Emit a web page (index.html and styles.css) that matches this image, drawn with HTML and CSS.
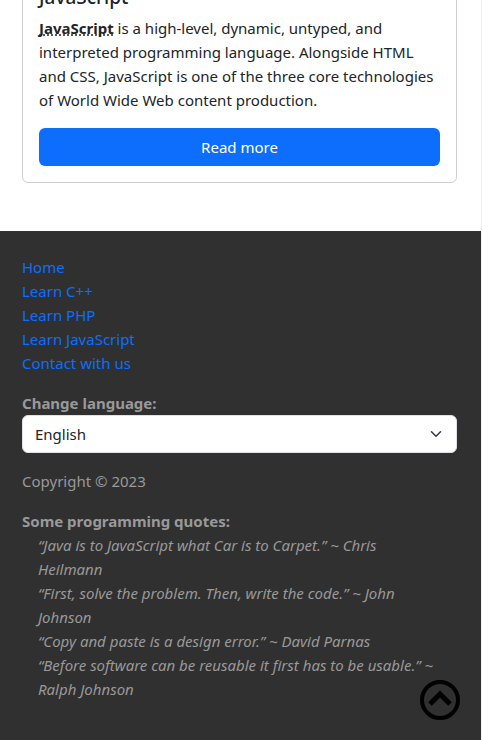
FILE: index.html
```html
<!DOCTYPE html>
<html lang="en">
<head>
  <meta charset="utf-8">
  <meta name="viewport" content="width=device-width, initial-scale=1">
  <title>Learn programming</title>
  <link rel="stylesheet" href="styles.css">
</head>
<body>
  <main class="content">
    <article class="card">
      <h5 class="card-title">JavaScript</h5>
      <p class="card-text"><abbr class="term">JavaScript</abbr> is a high-level, dynamic, untyped, and interpreted programming language. Alongside HTML and CSS, JavaScript is one of the three core technologies of World Wide Web content production.</p>
      <a class="btn" href="#javascript">Read more</a>
    </article>
  </main>
  <footer class="footer">
    <nav class="links">
      <a href="#home">Home</a>
      <a href="#cpp">Learn C++</a>
      <a href="#php">Learn PHP</a>
      <a href="#javascript">Learn JavaScript</a>
      <a href="#contact">Contact with us</a>
    </nav>
    <div class="language">
      <label for="language">Change language:</label>
      <div class="select-wrap">
        <select id="language" class="select">
          <option>English</option>
        </select>
        <svg class="chevron" viewBox="0 0 16 16" aria-hidden="true"><path d="m2 5 6 6 6-6"/></svg>
      </div>
    </div>
    <p class="copyright">Copyright © 2023</p>
    <section>
      <h6 class="quotes-title">Some programming quotes:</h6>
      <ul class="quotes">
        <li>“Java is to JavaScript what Car is to Carpet.” ~ Chris<br>Heilmann</li>
        <li>“First, solve the problem. Then, write the code.” ~ John<br>Johnson</li>
        <li>“Copy and paste is a design error.” ~ David Parnas</li>
        <li>“Before software can be reusable it first has to be usable.” ~ Ralph Johnson</li>
      </ul>
    </section>
  </footer>
  <a class="to-top" href="#home" aria-label="Back to top">
    <svg viewBox="0 0 40 40" aria-hidden="true"><circle cx="20" cy="20" r="18"/><path d="m10 24 10-10 10 10"/></svg>
  </a>
</body>
</html>
```

FILE: styles.css
```css
* {
  box-sizing: border-box;
}

body {
  display: flex;
  flex-direction: column;
  min-height: 100vh;
  margin: 0;
  border-right: 1px solid #f0f0f0;
  overflow: hidden;
  background: #fff;
  color: #212529;
  font-family: "Segoe UI", "Noto Sans", sans-serif;
  font-size: 15px;
  line-height: 24px;
}

a {
  color: #0d6efd;
  text-decoration: none;
}

.content {
  padding: 0 24px 48px 22px;
}

.card {
  margin-top: -32px;
  padding: 16px;
  border: 1px solid #cfcfcf;
  border-radius: 6px;
}

.card-title {
  margin: 0 0 7px;
  font-size: 19px;
  font-weight: 500;
  line-height: 24px;
}

.card-text {
  margin: 0 0 16px;
}

.term {
  font-weight: 700;
  text-decoration: underline dotted;
  text-decoration-skip-ink: none;
}

.btn {
  display: block;
  padding: 7px 12px;
  border-radius: 6px;
  background: #0d6efd;
  color: #fff;
  text-align: center;
}

.footer {
  flex: 1;
  padding: 24px 24px 38px 22px;
  background: #303030;
  color: #999;
}

.links {
  display: flex;
  flex-direction: column;
  align-items: flex-start;
}

.language {
  margin: 16px 0;
}

.language label {
  display: block;
  font-weight: 700;
}

.select-wrap {
  position: relative;
}

.select {
  display: block;
  width: 100%;
  height: 38px;
  padding: 0 36px 0 12px;
  border: 1px solid #dee2e6;
  border-radius: 6px;
  appearance: none;
  background: #fff;
  color: #212529;
  font: inherit;
}

.chevron {
  position: absolute;
  top: 13px;
  right: 15px;
  width: 12px;
  height: 12px;
  fill: none;
  stroke: #343a40;
  stroke-width: 2;
  stroke-linecap: round;
  stroke-linejoin: round;
  pointer-events: none;
}

.copyright {
  margin: 0 0 16px;
}

.quotes-title {
  margin: 0;
  font-size: 15px;
  font-weight: 700;
}

.quotes {
  margin: 0;
  padding: 0 0 0 16px;
  font-style: italic;
  list-style: none;
}

.to-top {
  position: fixed;
  right: 22px;
  bottom: 20px;
  width: 40px;
  height: 40px;
}

.to-top svg {
  display: block;
  fill: none;
  stroke: #000;
  stroke-width: 4;
}

.to-top path {
  stroke-width: 5;
}
```
